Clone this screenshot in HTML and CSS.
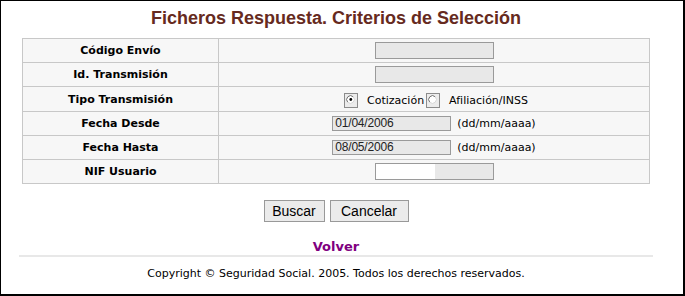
FILE: index.html
```html
<!DOCTYPE html>
<html lang="es">
<head>
<meta charset="utf-8">
<title>Ficheros Respuesta</title>
<link rel="stylesheet" href="styles.css">
</head>
<body>
<div class="frame">
  <div class="page">
    <h1 class="title">Ficheros Respuesta. Criterios de Selección</h1>
    <table class="criteria">
      <colgroup><col class="col-label"><col class="col-value"></colgroup>
      <tr>
        <td class="label">Código Envío</td>
        <td class="value"><span class="field"></span></td>
      </tr>
      <tr>
        <td class="label">Id. Transmisión</td>
        <td class="value"><span class="field"></span></td>
      </tr>
      <tr class="row-radio">
        <td class="label">Tipo Transmisión</td>
        <td class="value value-radio"><span class="radio"><svg width="11" height="12" viewBox="0 0 11 12"><circle cx="5.5" cy="4.5" r="3.8" fill="#fff"/><path d="M2.8 7.2 A3.8 3.8 0 0 1 8.2 1.8" fill="none" stroke="#6e6e6e" stroke-width="1"/><path d="M8.2 1.8 A3.8 3.8 0 0 1 2.8 7.2" fill="none" stroke="#d8d8d8" stroke-width="1"/><circle cx="5.8" cy="4.5" r="1.4" fill="#000"/></svg></span><span class="opt">Cotización</span><span class="radio"><svg width="11" height="12" viewBox="0 0 11 12"><circle cx="5.5" cy="4.5" r="3.8" fill="#fff"/><path d="M2.8 7.2 A3.8 3.8 0 0 1 8.2 1.8" fill="none" stroke="#6e6e6e" stroke-width="1"/><path d="M8.2 1.8 A3.8 3.8 0 0 1 2.8 7.2" fill="none" stroke="#d8d8d8" stroke-width="1"/></svg></span><span class="opt">Afiliación/INSS</span></td>
      </tr>
      <tr>
        <td class="label">Fecha Desde</td>
        <td class="value"><span class="date">01/04/2006</span><span class="hint">(dd/mm/aaaa)</span></td>
      </tr>
      <tr>
        <td class="label">Fecha Hasta</td>
        <td class="value"><span class="date">08/05/2006</span><span class="hint">(dd/mm/aaaa)</span></td>
      </tr>
      <tr>
        <td class="label">NIF Usuario</td>
        <td class="value"><span class="field field-nif"></span></td>
      </tr>
    </table>
    <div class="actions">
      <button class="btn btn-search" type="button">Buscar</button>
      <button class="btn btn-cancel" type="button">Cancelar</button>
    </div>
    <div class="back"><a class="back-link" href="#">Volver</a></div>
    <div class="rule"></div>
    <p class="copyright">Copyright © Seguridad Social. 2005. Todos los derechos reservados.</p>
  </div>
</div>
</body>
</html>
```
FILE: styles.css
```css
html, body {
  margin: 0;
  padding: 0;
  background: #fff;
}
.frame {
  box-sizing: border-box;
  width: 685px;
  height: 296px;
  border-top: 1px solid #000;
  border-left: 1px solid #000;
  border-right: 2px solid #000;
  border-bottom: 2px solid #000;
  background: #fff;
  overflow: hidden;
}
.page {
  margin-left: 18px;
  width: 634px;
}
.title {
  margin: 0;
  padding-top: 6px;
  margin-bottom: 9px;
  font-family: "Liberation Sans", Arial, sans-serif;
  font-size: 18px;
  line-height: 22px;
  font-weight: bold;
  color: #662a20;
  text-align: center;
}
.criteria {
  width: 628px;
  margin: 0 auto;
  border-collapse: collapse;
  background: #f7f7f7;
  border: 1px solid #c8c8c8;
}
.col-label { width: 196px; }
.criteria td {
  border: 1px solid #c8c8c8;
  padding: 0;
  height: 23px;
  vertical-align: middle;
  font-family: "DejaVu Sans", Verdana, sans-serif;
  font-size: 11px;
  color: #000;
}
.criteria .row-radio td { height: 24px; }
.label {
  font-weight: bold;
  text-align: center;
}
.value {
  text-align: center;
  font-size: 0;
}
.value-radio {
  padding-left: 6px !important;
}
.field {
  display: inline-block;
  vertical-align: middle;
  box-sizing: border-box;
  width: 119px;
  height: 17px;
  border: 1px solid #9a9a9a;
  background: #e8e8e8;
}
.field-nif {
  background: linear-gradient(to right, #fff 0, #fff 59px, #e8e8e8 59px);
}
.date {
  display: inline-block;
  vertical-align: middle;
  box-sizing: border-box;
  width: 119px;
  height: 15px;
  border: 1px solid #9a9a9a;
  background: #e8e8e8;
  font-family: "Liberation Sans", Arial, sans-serif;
  font-size: 12px;
  line-height: 13px;
  color: #222;
  text-align: left;
  padding-left: 2px;
  letter-spacing: -0.2px;
}
.hint {
  display: inline-block;
  vertical-align: middle;
  margin-left: 6px;
  font-size: 11px;
  line-height: 13px;
}
.radio {
  display: inline-block;
  vertical-align: middle;
  width: 12px;
  height: 13px;
  border: 1px solid #8c8c8c;
  background: #ececec;
  margin-top: 3px;
}
.radio svg { display: block; margin: 1px 0 0 0; }
.opt {
  display: inline-block;
  vertical-align: middle;
  font-size: 11px;
  line-height: 13px;
  margin-left: 9px;
  margin-right: 2px;
  margin-top: 3px;
}
.actions {
  display: flex;
  justify-content: center;
  gap: 5px;
  margin-top: 16px;
}
.btn {
  box-sizing: border-box;
  height: 22px;
  padding: 0;
  margin: 0;
  border: 1px solid #999;
  background: #ebebeb;
  font-family: "Liberation Sans", Arial, sans-serif;
  font-size: 14px;
  color: #000;
}
.btn-search { width: 61px; }
.btn-cancel { width: 79px; }
.back {
  margin-top: 16px;
  text-align: center;
  line-height: 16px;
}
.back-link {
  font-family: "DejaVu Sans", Verdana, sans-serif;
  font-size: 13px;
  font-weight: bold;
  color: #800080;
  text-decoration: none;
}
.rule {
  height: 2px;
  background: #e8e8e8;
}
.copyright {
  margin: 10px 0 0 0;
  text-align: center;
  font-family: "DejaVu Sans", Verdana, sans-serif;
  font-size: 11px;
  line-height: 13px;
  color: #000;
}
```
